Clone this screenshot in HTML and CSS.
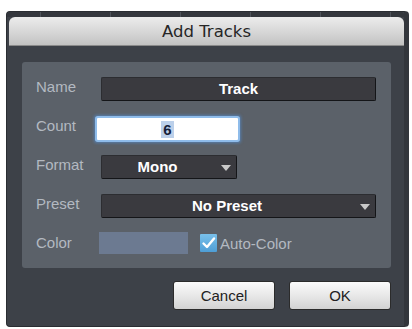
FILE: index.html
```html
<!DOCTYPE html>
<html>
<head>
<meta charset="utf-8">
<link rel="stylesheet" href="styles.css">
</head>
<body>
<div class="dialog">
  <div class="topband"></div>
  <div class="titlebar">Add Tracks</div>
  <div class="content">
    <div class="panel">
      <span class="label">Name</span>
      <div class="field wide">Track</div>

      <span class="label">Count</span>
      <div class="count"><span class="sel">6</span></div>

      <span class="label">Format</span>
      <div class="field drop format"><span class="dtext">Mono</span><span class="arrow"></span></div>

      <span class="label">Preset</span>
      <div class="field drop wide"><span class="dtext">No Preset</span><span class="arrow"></span></div>

      <span class="label">Color</span>
      <div class="colorrow">
        <div class="swatch"></div>
        <div class="check">
          <svg width="17" height="18" viewBox="0 0 17 18"><path d="M3.5 9.5 L7 13 L14 4.5" fill="none" stroke="#ffffff" stroke-width="2.4" stroke-linecap="round" stroke-linejoin="round"/></svg>
        </div>
        <span class="autotext">Auto-Color</span>
      </div>
    </div>
    <div class="buttons">
      <button class="btn">Cancel</button>
      <button class="btn">OK</button>
    </div>
  </div>
</div>
</body>
</html>
```
FILE: styles.css
```css
html, body {
  margin: 0;
  padding: 0;
  background: #ffffff;
}
body {
  width: 412px;
  height: 329px;
  overflow: hidden;
  font-family: "Liberation Sans", Arial, sans-serif;
}
.dialog {
  margin: 11px 0 0 6px;
  width: 403px;
  height: 316px;
  box-sizing: border-box;
  background: #3d4148;
  border: 1px solid #2a2d32;
  border-right: 5px solid #33363c;
  border-radius: 4px;
  display: flex;
  flex-direction: column;
}
.topband {
  height: 5px;
  background:
    repeating-linear-gradient(90deg, transparent 0 33px, #50545b 33px 34px, transparent 34px 70px),
    #34373d;
  border-radius: 3px 3px 0 0;
}
.titlebar {
  margin: 0 0 0 2px;
  height: 29px;
  line-height: 29px;
  text-align: center;
  font-family: "DejaVu Sans", sans-serif;
  font-size: 16.5px;
  color: #262626;
  background: linear-gradient(#ececec, #d4d4d4 60%, #c2c2c2);
  border-radius: 6px 6px 0 0;
  border-bottom: 1px solid #8a8a8a;
  box-sizing: border-box;
}
.content {
  padding: 16px 12px 0 15px;
  display: flex;
  flex-direction: column;
}
.panel {
  width: 369px;
  height: 206px;
  box-sizing: border-box;
  background: #5b6169;
  border-radius: 3px;
  padding: 15px 15px 0 14px;
  display: grid;
  grid-template-columns: 65px 1fr;
  grid-auto-rows: 24px;
  row-gap: 15px;
  align-items: start;
}
.label {
  font-size: 15px;
  line-height: 17px;
  color: #b3b9c1;
  padding-top: 1px;
}
.field {
  height: 24px;
  box-sizing: border-box;
  background: #3a3a3f;
  border: 1px solid #2c2d31;
  border-right-color: #141518;
  border-bottom-color: #141518;
  border-radius: 2px;
  color: #ffffff;
  font-weight: bold;
  font-size: 15px;
  line-height: 22px;
  text-align: center;
}
.drop {
  display: flex;
  align-items: center;
}
.dtext {
  flex: 1;
  text-align: center;
  padding-left: 4px;
}
.arrow {
  width: 0;
  height: 0;
  border-left: 5px solid transparent;
  border-right: 5px solid transparent;
  border-top: 6px solid #c9c9c9;
  margin: 1px 5px 0 12px;
}
.format {
  width: 136px;
}
.count {
  margin: 2px 0 0 -4px;
  width: 141px;
  height: 22px;
  background: #ffffff;
  box-shadow: 0 0 0 2px #8fbcea, 0 0 3px 3px rgba(80, 150, 230, 0.55);
  border-radius: 1px;
  display: flex;
  justify-content: center;
  align-items: center;
}
.sel {
  background: #bcd0ea;
  color: #14213a;
  font-weight: bold;
  font-size: 15px;
  line-height: 17px;
  padding: 0 2px;
}
.colorrow {
  display: flex;
  align-items: center;
  margin-top: -1px;
}
.swatch {
  margin-left: -2px;
  width: 89px;
  height: 22px;
  background: #6c7a91;
}
.check {
  margin-left: 12px;
  width: 17px;
  height: 18px;
  background: linear-gradient(#79c0ea, #4e9ed6);
  border-radius: 1px;
  display: flex;
}
.autotext {
  margin-left: 3px;
  font-size: 15px;
  color: #b3b9c1;
}
.buttons {
  margin-top: 13px;
  width: 369px;
  display: flex;
  justify-content: flex-end;
  gap: 14px;
}
.btn {
  width: 102px;
  height: 29px;
  box-sizing: border-box;
  border: 1px solid #2b2b2b;
  border-radius: 3px;
  background: linear-gradient(#fbfbfb, #e6e6e6 55%, #d2d2d2);
  font-family: "Liberation Sans", Arial, sans-serif;
  font-size: 15px;
  color: #222222;
  padding: 0;
}
```
